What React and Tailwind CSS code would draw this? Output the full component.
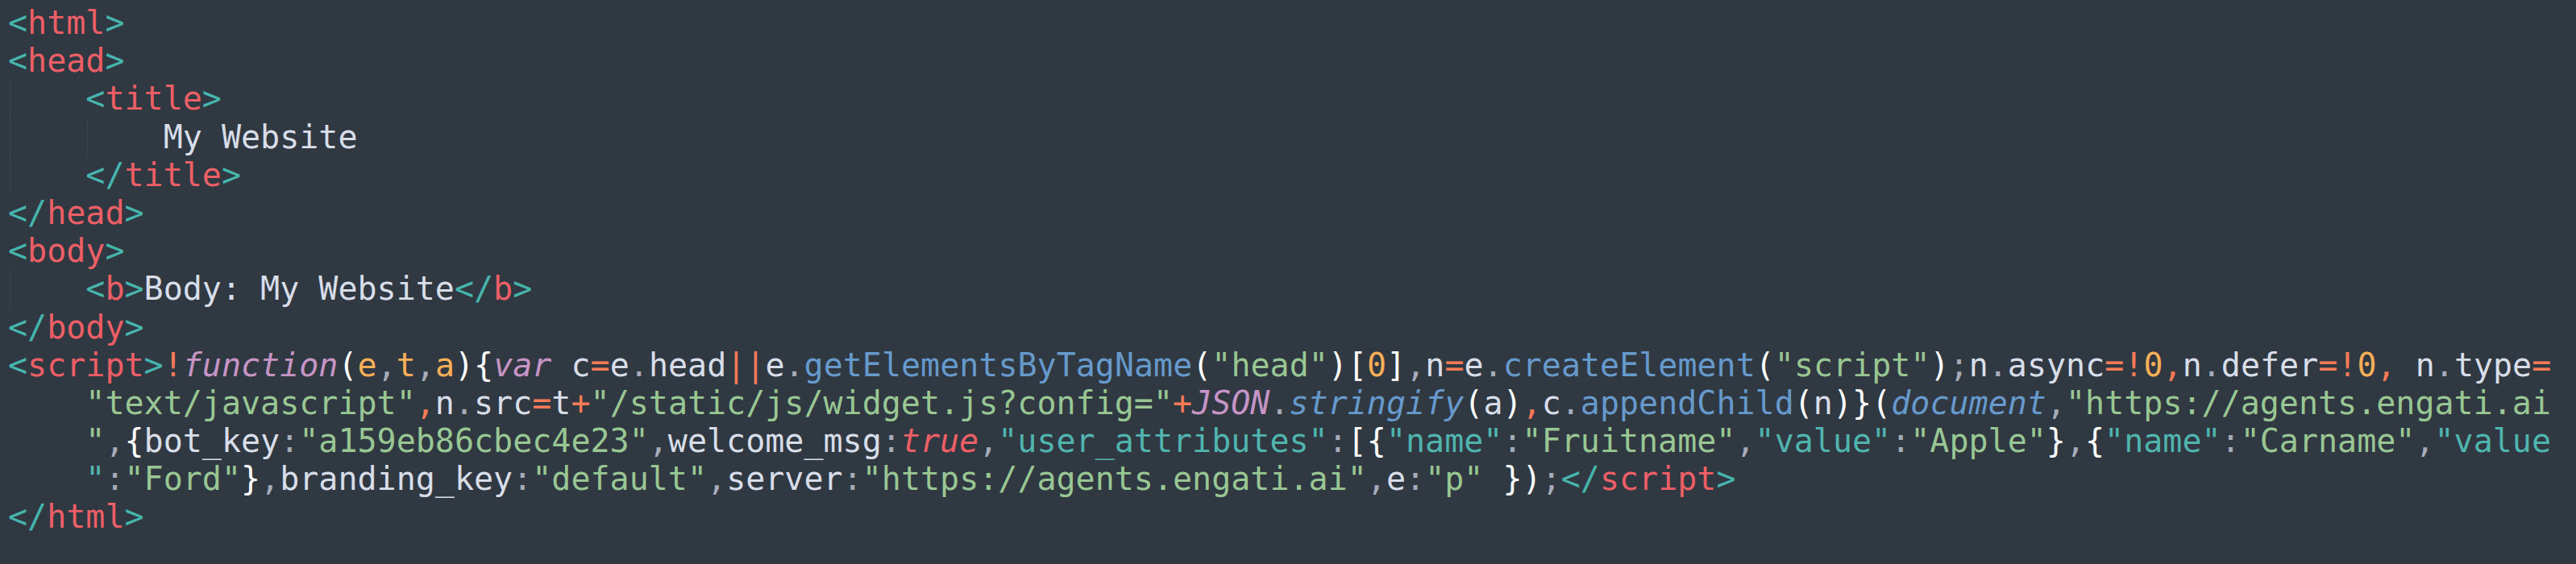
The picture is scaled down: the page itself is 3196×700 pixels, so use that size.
import React from "react";

const C = {
  tb: "text-[#45b5ad]",
  tn: "text-[#ec5f66]",
  tx: "text-[#d8dee9]",
  w: "text-[#ffffff]",
  g: "text-[#a6acb9]",
  op: "text-[#f97b58]",
  or: "text-[#f9ae58]",
  gr: "text-[#99c794]",
  te: "text-[#4fb5ae]",
  bl: "text-[#6699cc]",
  pk: "text-[#c695c6]",
  rd: "text-[#ec5f66]",
};

const T = (cls, text, italic) => ({ cls, text, italic });

const Guide = () => (
  <span className="inline-block w-[4ch] border-l border-dotted border-[#464e58] h-[47.2px] align-top ml-[2px] -mr-[2px]">
    {"    "}
  </span>
);
const Sp = () => <span className="inline-block w-[4ch]">{"    "}</span>;

const tag = (name, close) => [
  T(C.tb, close ? "</" : "<"),
  T(C.tn, name),
  T(C.tb, ">"),
];

const lines = [
  { ind: [], toks: tag("html") },
  { ind: [], toks: tag("head") },
  { ind: ["g"], toks: tag("title") },
  { ind: ["g", "g"], toks: [T(C.tx, "My Website")] },
  { ind: ["g"], toks: tag("title", true) },
  { ind: [], toks: tag("head", true) },
  { ind: [], toks: tag("body") },
  {
    ind: ["g"],
    toks: [...tag("b"), T(C.tx, "Body: My Website"), ...tag("b", true)],
  },
  { ind: [], toks: tag("body", true) },
  {
    ind: [],
    toks: [
      ...tag("script"),
      T(C.op, "!"),
      T(C.pk, "function", true),
      T(C.w, "("),
      T(C.or, "e"),
      T(C.g, ","),
      T(C.or, "t"),
      T(C.g, ","),
      T(C.or, "a"),
      T(C.w, ")"),
      T(C.w, "{"),
      T(C.pk, "var", true),
      T(C.tx, " c"),
      T(C.op, "="),
      T(C.tx, "e"),
      T(C.g, "."),
      T(C.tx, "head"),
      T(C.op, "||"),
      T(C.tx, "e"),
      T(C.g, "."),
      T(C.bl, "getElementsByTagName"),
      T(C.w, "("),
      T(C.gr, '"head"'),
      T(C.w, ")"),
      T(C.w, "["),
      T(C.or, "0"),
      T(C.w, "]"),
      T(C.g, ","),
      T(C.tx, "n"),
      T(C.op, "="),
      T(C.tx, "e"),
      T(C.g, "."),
      T(C.bl, "createElement"),
      T(C.w, "("),
      T(C.gr, '"script"'),
      T(C.w, ")"),
      T(C.g, ";"),
      T(C.tx, "n"),
      T(C.g, "."),
      T(C.tx, "async"),
      T(C.op, "=!"),
      T(C.or, "0"),
      T(C.op, ","),
      T(C.tx, "n"),
      T(C.g, "."),
      T(C.tx, "defer"),
      T(C.op, "=!"),
      T(C.or, "0"),
      T(C.op, ","),
      T(C.tx, " n"),
      T(C.g, "."),
      T(C.tx, "type"),
      T(C.op, "="),
    ],
  },
  {
    ind: ["s"],
    toks: [
      T(C.gr, '"text/javascript"'),
      T(C.op, ","),
      T(C.tx, "n"),
      T(C.g, "."),
      T(C.tx, "src"),
      T(C.op, "="),
      T(C.tx, "t"),
      T(C.op, "+"),
      T(C.gr, '"/static/js/widget.js?config="'),
      T(C.op, "+"),
      T(C.pk, "JSON", true),
      T(C.g, "."),
      T(C.bl, "stringify", true),
      T(C.w, "("),
      T(C.tx, "a"),
      T(C.w, ")"),
      T(C.op, ","),
      T(C.tx, "c"),
      T(C.g, "."),
      T(C.bl, "appendChild"),
      T(C.w, "("),
      T(C.tx, "n"),
      T(C.w, ")"),
      T(C.w, "}"),
      T(C.w, "("),
      T(C.bl, "document", true),
      T(C.g, ","),
      T(C.gr, '"https://agents.engati.ai'),
    ],
  },
  {
    ind: ["s"],
    toks: [
      T(C.gr, '"'),
      T(C.g, ","),
      T(C.w, "{"),
      T(C.tx, "bot_key"),
      T(C.g, ":"),
      T(C.gr, '"a159eb86cbec4e23"'),
      T(C.g, ","),
      T(C.tx, "welcome_msg"),
      T(C.g, ":"),
      T(C.rd, "true", true),
      T(C.g, ","),
      T(C.te, '"user_attributes"'),
      T(C.g, ":"),
      T(C.w, "[{"),
      T(C.te, '"name"'),
      T(C.g, ":"),
      T(C.gr, '"Fruitname"'),
      T(C.g, ","),
      T(C.te, '"value"'),
      T(C.g, ":"),
      T(C.gr, '"Apple"'),
      T(C.w, "}"),
      T(C.g, ","),
      T(C.w, "{"),
      T(C.te, '"name"'),
      T(C.g, ":"),
      T(C.gr, '"Carname"'),
      T(C.g, ","),
      T(C.te, '"value'),
    ],
  },
  {
    ind: ["s"],
    toks: [
      T(C.te, '"'),
      T(C.g, ":"),
      T(C.gr, '"Ford"'),
      T(C.w, "}"),
      T(C.g, ","),
      T(C.tx, "branding_key"),
      T(C.g, ":"),
      T(C.gr, '"default"'),
      T(C.g, ","),
      T(C.tx, "server"),
      T(C.g, ":"),
      T(C.gr, '"https://agents.engati.ai"'),
      T(C.g, ","),
      T(C.tx, "e"),
      T(C.g, ":"),
      T(C.gr, '"p"'),
      T(C.tx, " "),
      T(C.w, "})"),
      T(C.g, ";"),
      ...tag("script", true),
    ],
  },
  { ind: [], toks: tag("html", true) },
];

export default function App() {
  return (
    <div className="w-full h-[700px] bg-[#303841] pt-[5px] pl-[10px] overflow-hidden">
      <div
        className="text-[40px] leading-[47.2px] whitespace-pre"
        style={{ fontFamily: '"DejaVu Sans Mono", "Liberation Mono", monospace' }}
      >
        {lines.map((ln, i) => (
          <div key={i} className="h-[47.2px] flex">
            {ln.ind.map((k, j) => (k === "g" ? <Guide key={j} /> : <Sp key={j} />))}
            <span>
              {ln.toks.map((t, j) => (
                <span key={j} className={t.italic ? `${t.cls} italic` : t.cls}>
                  {t.text}
                </span>
              ))}
            </span>
          </div>
        ))}
      </div>
    </div>
  );
}
